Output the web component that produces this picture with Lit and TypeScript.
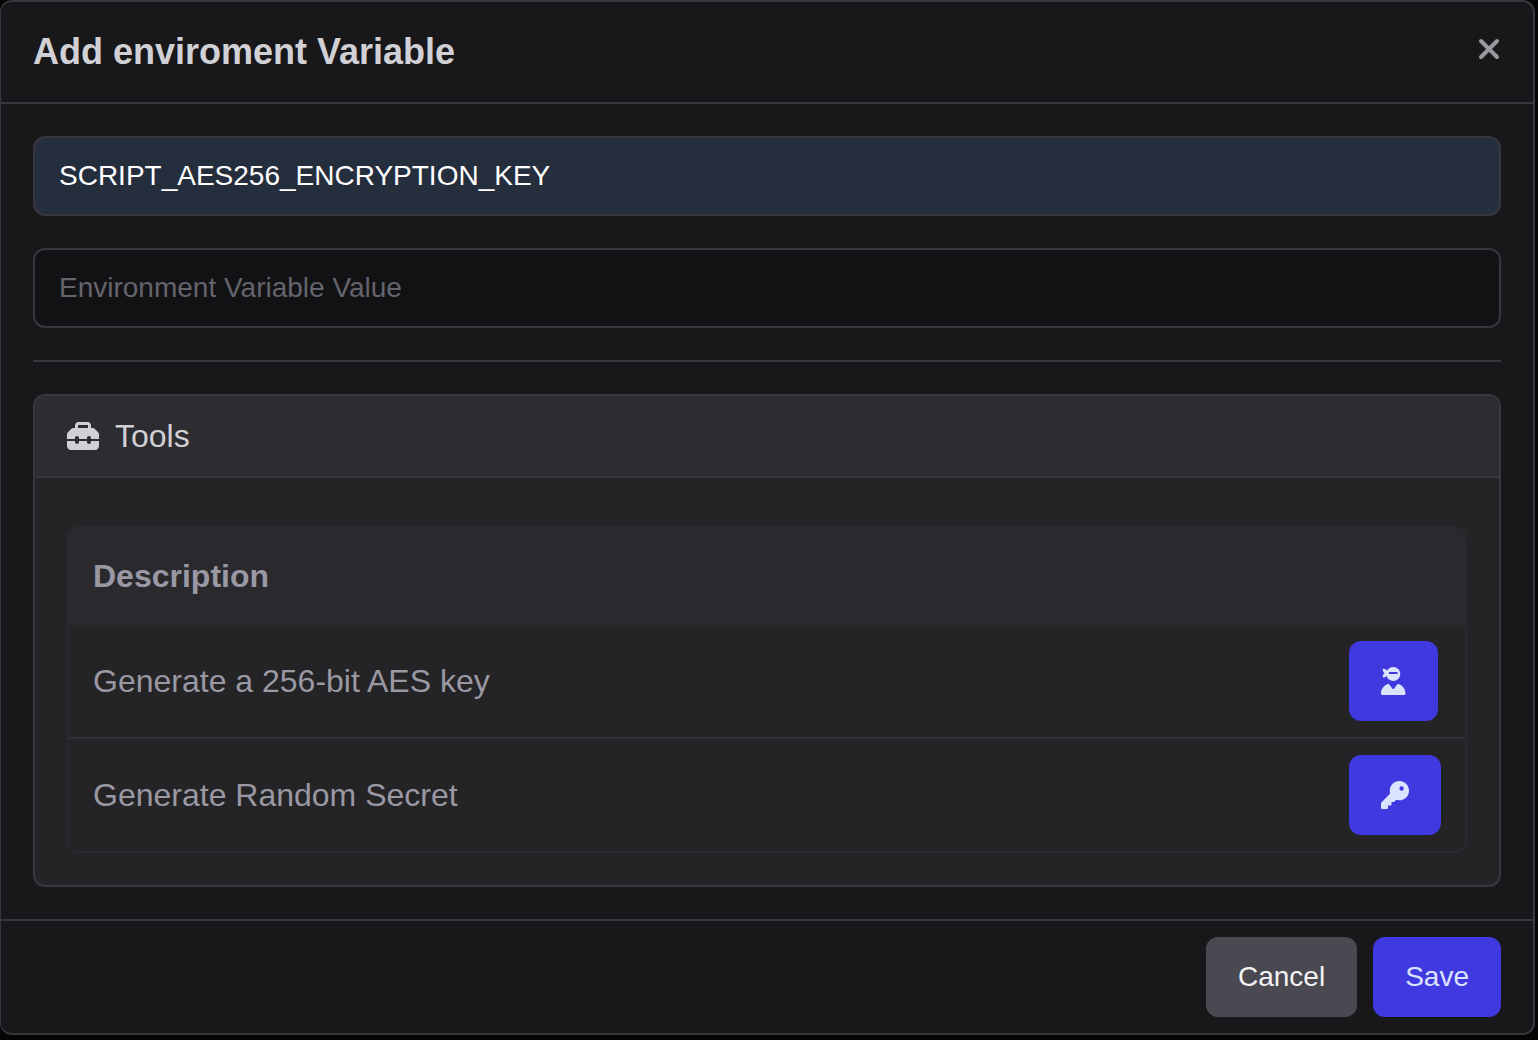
import { LitElement, html, svg, css } from "lit";
import { customElement, property, state } from "lit/decorators.js";

const ICONS: Record<string, { box: string; d: string }> = {
  toolbox: {
    box: "0 32 512 448",
    d: "M176 88v40H336V88c0-4.400-3.600-8-8-8H184c-4.400 0-8 3.600-8 8zm-48 40V88c0-30.900 25.100-56 56-56H328c30.900 0 56 25.100 56 56v40h28.100c12.700 0 24.900 5.100 33.900 14.100l51.900 51.900c9 9 14.100 21.200 14.100 33.900V304H384V288c0-17.700-14.300-32-32-32s-32 14.300-32 32v16H192V288c0-17.700-14.300-32-32-32s-32 14.300-32 32v16H0V227.900c0-12.700 5.100-24.900 14.100-33.900l51.900-51.900c9-9 21.200-14.100 33.900-14.100H128zM0 416V336H128v16c0 17.700 14.300 32 32 32s32-14.300 32-32V336H320v16c0 17.700 14.300 32 32 32s32-14.300 32-32V336H512v80c0 35.300-28.700 64-64 64H64c-35.300 0-64-28.700-64-64z",
  },
  ninja: {
    box: "0 0 448 512",
    d: "M224 256c-57.200 0-105.600-37.500-122-89.300c-1.100 1.300-2.200 2.600-3.500 3.800c-15.800 15.800-38.800 20.700-53.600 22.100c-8.100 .8-14.600-5.700-13.800-13.800c1.400-14.700 6.300-37.800 22.100-53.600c5.800-5.800 12.600-10.100 19.600-13.400c-7-3.200-13.800-7.600-19.600-13.400C37.400 82.700 32.600 59.700 31.100 44.900c-.8-8.100 5.700-14.600 13.800-13.800c14.700 1.400 37.800 6.300 53.600 22.100c4.800 4.800 8.700 10.400 11.700 16.100C131.400 28.200 174.400 0 224 0c70.700 0 128 57.300 128 128s-57.300 128-128 128zM0 482.300C0 399.500 56.400 330 132.800 309.900c6-1.600 12.200 .9 15.900 5.800l62.500 83.300c6.400 8.500 19.200 8.500 25.600 0l62.500-83.300c3.700-4.900 9.900-7.400 15.900-5.800C391.600 330 448 399.500 448 482.300c0 16.400-13.300 29.700-29.700 29.700H29.700C13.300 512 0 498.700 0 482.300zM160 92c-9.900 0-18 8.100-18 18s8.100 18 18 18H288c9.900 0 18-8.100 18-18s-8.100-18-18-18H160z",
  },
  key: {
    box: "0 0 512 512",
    d: "M336 352c97.200 0 176-78.800 176-176S433.200 0 336 0S160 78.800 160 176c0 18.700 2.900 36.800 8.300 53.700L7 391c-4.500 4.500-7 10.600-7 17v80c0 13.300 10.700 24 24 24h80c13.300 0 24-10.700 24-24V448h40c13.300 0 24-10.700 24-24V384h40c6.400 0 12.500-2.500 17-7l33.300-33.300c16.900 5.400 35 8.300 53.700 8.300zM376 96a40 40 0 1 1 0 80 40 40 0 1 1 0-80z",
  },
};

@customElement("app-icon")
class AppIcon extends LitElement {
  static styles = css`
    :host { display: flex; }
    svg { display: block; height: 28px; fill: currentColor; fill-rule: evenodd; }
  `;
  @property() name = "key";
  render() {
    const icon = ICONS[this.name];
    return html`<svg viewBox=${icon.box} aria-hidden="true">${svg`<path d=${icon.d}></path>`}</svg>`;
  }
}

@customElement("app-root")
class AppRoot extends LitElement {
  static styles = css`
    :host {
      display: block;
      box-sizing: border-box;
      min-height: 100vh;
      padding-right: 3px;
      background: #050506;
      color: #d1d0d5;
      font-family: "Liberation Sans", Arial, Helvetica, sans-serif;
      font-size: 28px;
      --line: #38373e;
      --primary: #4039df;
    }
    *, *::before, *::after { box-sizing: border-box; }
    .modal {
      background: #18181a;
      border: 2px solid var(--line);
      border-left-width: 1px;
      border-radius: 12px;
    }
    .head {
      display: flex;
      align-items: center;
      justify-content: space-between;
      padding: 28px 32px;
      border-bottom: 2px solid var(--line);
    }
    h1 { margin: 0; font-size: 36px; line-height: 44px; font-weight: 700; }
    .close {
      display: flex;
      align-items: flex-start;
      height: 36px;
      padding: 0;
      border: 0;
      background: none;
      color: #99989d;
      cursor: pointer;
    }
    .close svg { width: 24px; height: 24px; margin-top: 3px; stroke: currentColor; stroke-width: 4; stroke-linecap: round; }
    .body { display: flex; flex-direction: column; gap: 32px; padding: 32px; }
    input {
      display: block;
      width: 100%;
      height: 80px;
      padding: 0 24px;
      border: 2px solid var(--line);
      border-radius: 12px;
      background: #121214;
      color: #fff;
      font: inherit;
      outline: none;
    }
    input::placeholder { color: #65646d; opacity: 1; }
    .filled { background: #252e3d; }
    hr { width: 100%; margin: 0; border: 0; border-top: 2px solid var(--line); }
    .card { border: 2px solid var(--line); border-radius: 12px; background: #242426; overflow: hidden; }
    .card-head {
      display: flex;
      align-items: center;
      gap: 16px;
      height: 82px;
      padding: 0 32px;
      border-bottom: 2px solid var(--line);
      background: #2d2c31;
    }
    h2 { margin: 0; font-size: 32px; line-height: 40px; font-weight: 400; }
    .card-body { padding: 48px 32px 32px; }
    .frame { border: 2px solid #2a292e; border-radius: 12px; overflow: hidden; }
    table { width: 100%; border-collapse: separate; border-spacing: 0; color: #9998a3; font-size: 32px; line-height: 40px; }
    th { height: 97px; padding: 0 24px 2px; background: #2a292e; text-align: left; font-weight: 700; }
    td { padding: 16px 24px; }
    .action-cell { width: 140px; }
    tbody tr + tr td { border-top: 2px solid #313135; }
    .btn {
      display: flex;
      align-items: center;
      height: 80px;
      padding: 0 32px;
      border: 0;
      border-radius: 12px;
      background: var(--primary);
      color: #dbe4fe;
      font: inherit;
      font-size: 28px;
      cursor: pointer;
    }
    .neutral { background: #4a4951; color: #f3f3f4; }
    .foot {
      display: flex;
      justify-content: flex-end;
      gap: 16px;
      padding: 16px 32px;
      border-top: 2px solid var(--line);
    }
  `;

  @state() private secretName = "SCRIPT_AES256_ENCRYPTION_KEY";
  @state() private secretValue = "";

  private tools = [
    { label: "Generate a 256-bit AES key", icon: "ninja", bytes: 32 },
    { label: "Generate Random Secret", icon: "key", bytes: 16 },
  ];

  private generate(bytes: number) {
    const data = crypto.getRandomValues(new Uint8Array(bytes));
    this.secretValue = Array.from(data, (b) => b.toString(16).padStart(2, "0")).join("");
  }

  render() {
    return html`
      <section class="modal" role="dialog" aria-labelledby="title">
        <header class="head">
          <h1 id="title">Add enviroment Variable</h1>
          <button class="close" type="button" aria-label="Close">
            <svg viewBox="0 0 24 24"><path d="M4 4L20 20M20 4L4 20"></path></svg>
          </button>
        </header>
        <div class="body">
          <input class="filled" aria-label="Environment Variable Name" .value=${this.secretName}
            @input=${(e: Event) => (this.secretName = (e.target as HTMLInputElement).value)} />
          <input aria-label="Environment Variable Value" placeholder="Environment Variable Value" .value=${this.secretValue}
            @input=${(e: Event) => (this.secretValue = (e.target as HTMLInputElement).value)} />
          <hr />
          <section class="card">
            <header class="card-head">
              <app-icon name="toolbox"></app-icon>
              <h2>Tools</h2>
            </header>
            <div class="card-body">
              <div class="frame">
                <table>
                  <thead>
                    <tr><th scope="col" colspan="2">Description</th></tr>
                  </thead>
                  <tbody>
                    ${this.tools.map((tool) => html`
                      <tr>
                        <td>${tool.label}</td>
                        <td class="action-cell">
                          <button class="btn" type="button" aria-label=${tool.label} @click=${() => this.generate(tool.bytes)}>
                            <app-icon name=${tool.icon}></app-icon>
                          </button>
                        </td>
                      </tr>`)}
                  </tbody>
                </table>
              </div>
            </div>
          </section>
        </div>
        <footer class="foot">
          <button class="btn neutral" type="button">Cancel</button>
          <button class="btn" type="button">Save</button>
        </footer>
      </section>
    `;
  }
}
